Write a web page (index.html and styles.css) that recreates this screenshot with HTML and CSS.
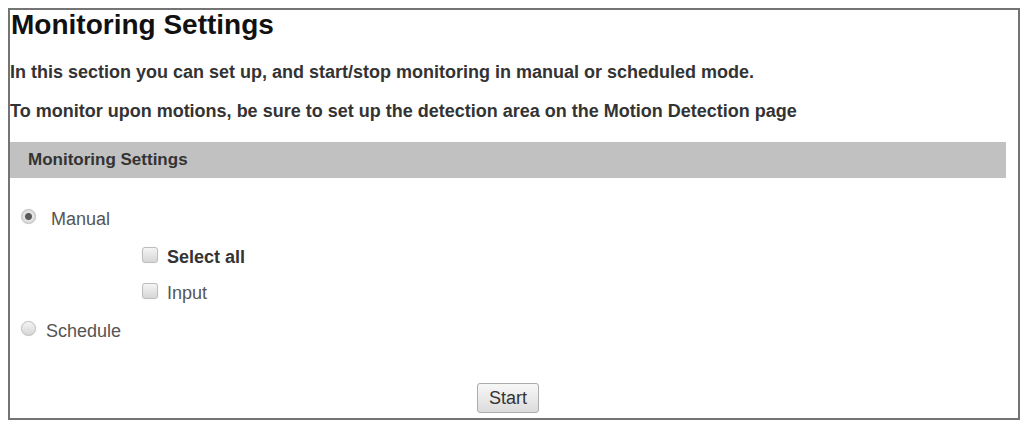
FILE: index.html
```html
<!DOCTYPE html>
<html lang="en">
<head>
  <meta charset="UTF-8" />
  <link rel="stylesheet" href="styles.css">
</head>
<body>
  <div class="panel">
    <h1>Monitoring Settings</h1>
    <p class="intro first">In this section you can set up, and start/stop monitoring in manual or scheduled mode.</p>
    <p class="intro">To monitor upon motions, be sure to set up the detection area on the Motion Detection page</p>

    <div class="section">
      <div class="section-head">Monitoring Settings</div>

      <form class="options">
        <label class="mode manual">
          <input type="radio" name="mode" value="manual" checked>
          <span>&nbsp;Manual</span>
        </label>
        <label class="trigger select-all">
          <input type="checkbox" name="all">
          <span>Select all</span>
        </label>
        <label class="trigger input-row">
          <input type="checkbox" name="input">
          <span>Input</span>
        </label>
        <label class="mode schedule">
          <input type="radio" name="mode" value="schedule">
          <span>Schedule</span>
        </label>
        <div class="actions">
          <button type="button">Start</button>
        </div>
      </form>
    </div>
  </div>
</body>
</html>
```

FILE: styles.css
```css
*, *::before, *::after { box-sizing: border-box; }
body {
  margin: 0;
  background: #fff;
  font-family: "Liberation Sans", Arial, sans-serif;
  color: #333;
}
.panel {
  margin: 8px 6px 0 8px;
  height: 412px;
  border: 2px solid #747474;
  display: flex;
  flex-direction: column;
}
h1 {
  margin: 0;
  padding-left: 1px;
  font-size: 28px;
  line-height: 30px;
  font-weight: bold;
  color: #111;
}
.intro {
  margin: 19px 0 0;
  font-size: 18px;
  line-height: 20px;
  font-weight: bold;
  color: #333;
}
.intro.first { margin-top: 22px; }

.section {
  margin: 21px 12px 0 0;
  flex: 1;
  display: flex;
  flex-direction: column;
}
.section-head {
  height: 36px;
  line-height: 36px;
  padding-left: 18px;
  background: #c1c1c1;
  font-size: 17px;
  font-weight: bold;
  color: #333;
}

/* option rows */
.options {
  flex: 1;
  display: flex;
  flex-direction: column;
  padding: 31px 0 5px;
  font-size: 18px;
  line-height: 20px;
  color: #555;
}
.options label {
  display: flex;
  align-items: center;
  height: 20px;
}
.mode { padding-left: 11px; gap: 10px; }
.trigger { padding-left: 132px; gap: 9px; }
.select-all { margin-top: 18px; color: #333; font-weight: bold; }
.input-row { margin-top: 16px; }
.schedule { margin-top: 18px; }

input[type="radio"],
input[type="checkbox"] {
  appearance: none;
  -webkit-appearance: none;
  margin: 0 0 6px;
  flex: none;
  border: 1px solid #bdbdbd;
  background: linear-gradient(#f4f4f4, #d6d6d6);
  box-shadow: 0 0 1px rgba(0, 0, 0, 0.15);
}
input[type="radio"] {
  width: 15px;
  height: 15px;
  border-radius: 50%;
}
input[type="radio"]:checked {
  background: radial-gradient(circle, #5a5a5a 0 3px, #e4e4e4 4px, #d2d2d2 100%);
}
input[type="checkbox"] {
  width: 16px;
  height: 16px;
  border-radius: 3px;
  margin-bottom: 4px;
}

.actions {
  margin-top: auto;
  display: flex;
  justify-content: center;
}
.actions button {
  width: 62px;
  height: 30px;
  padding: 0;
  border: 1px solid #ababab;
  border-radius: 3px;
  background: linear-gradient(#f7f7f7, #dcdcdc);
  font-family: inherit;
  font-size: 18px;
  color: #333;
}
```
